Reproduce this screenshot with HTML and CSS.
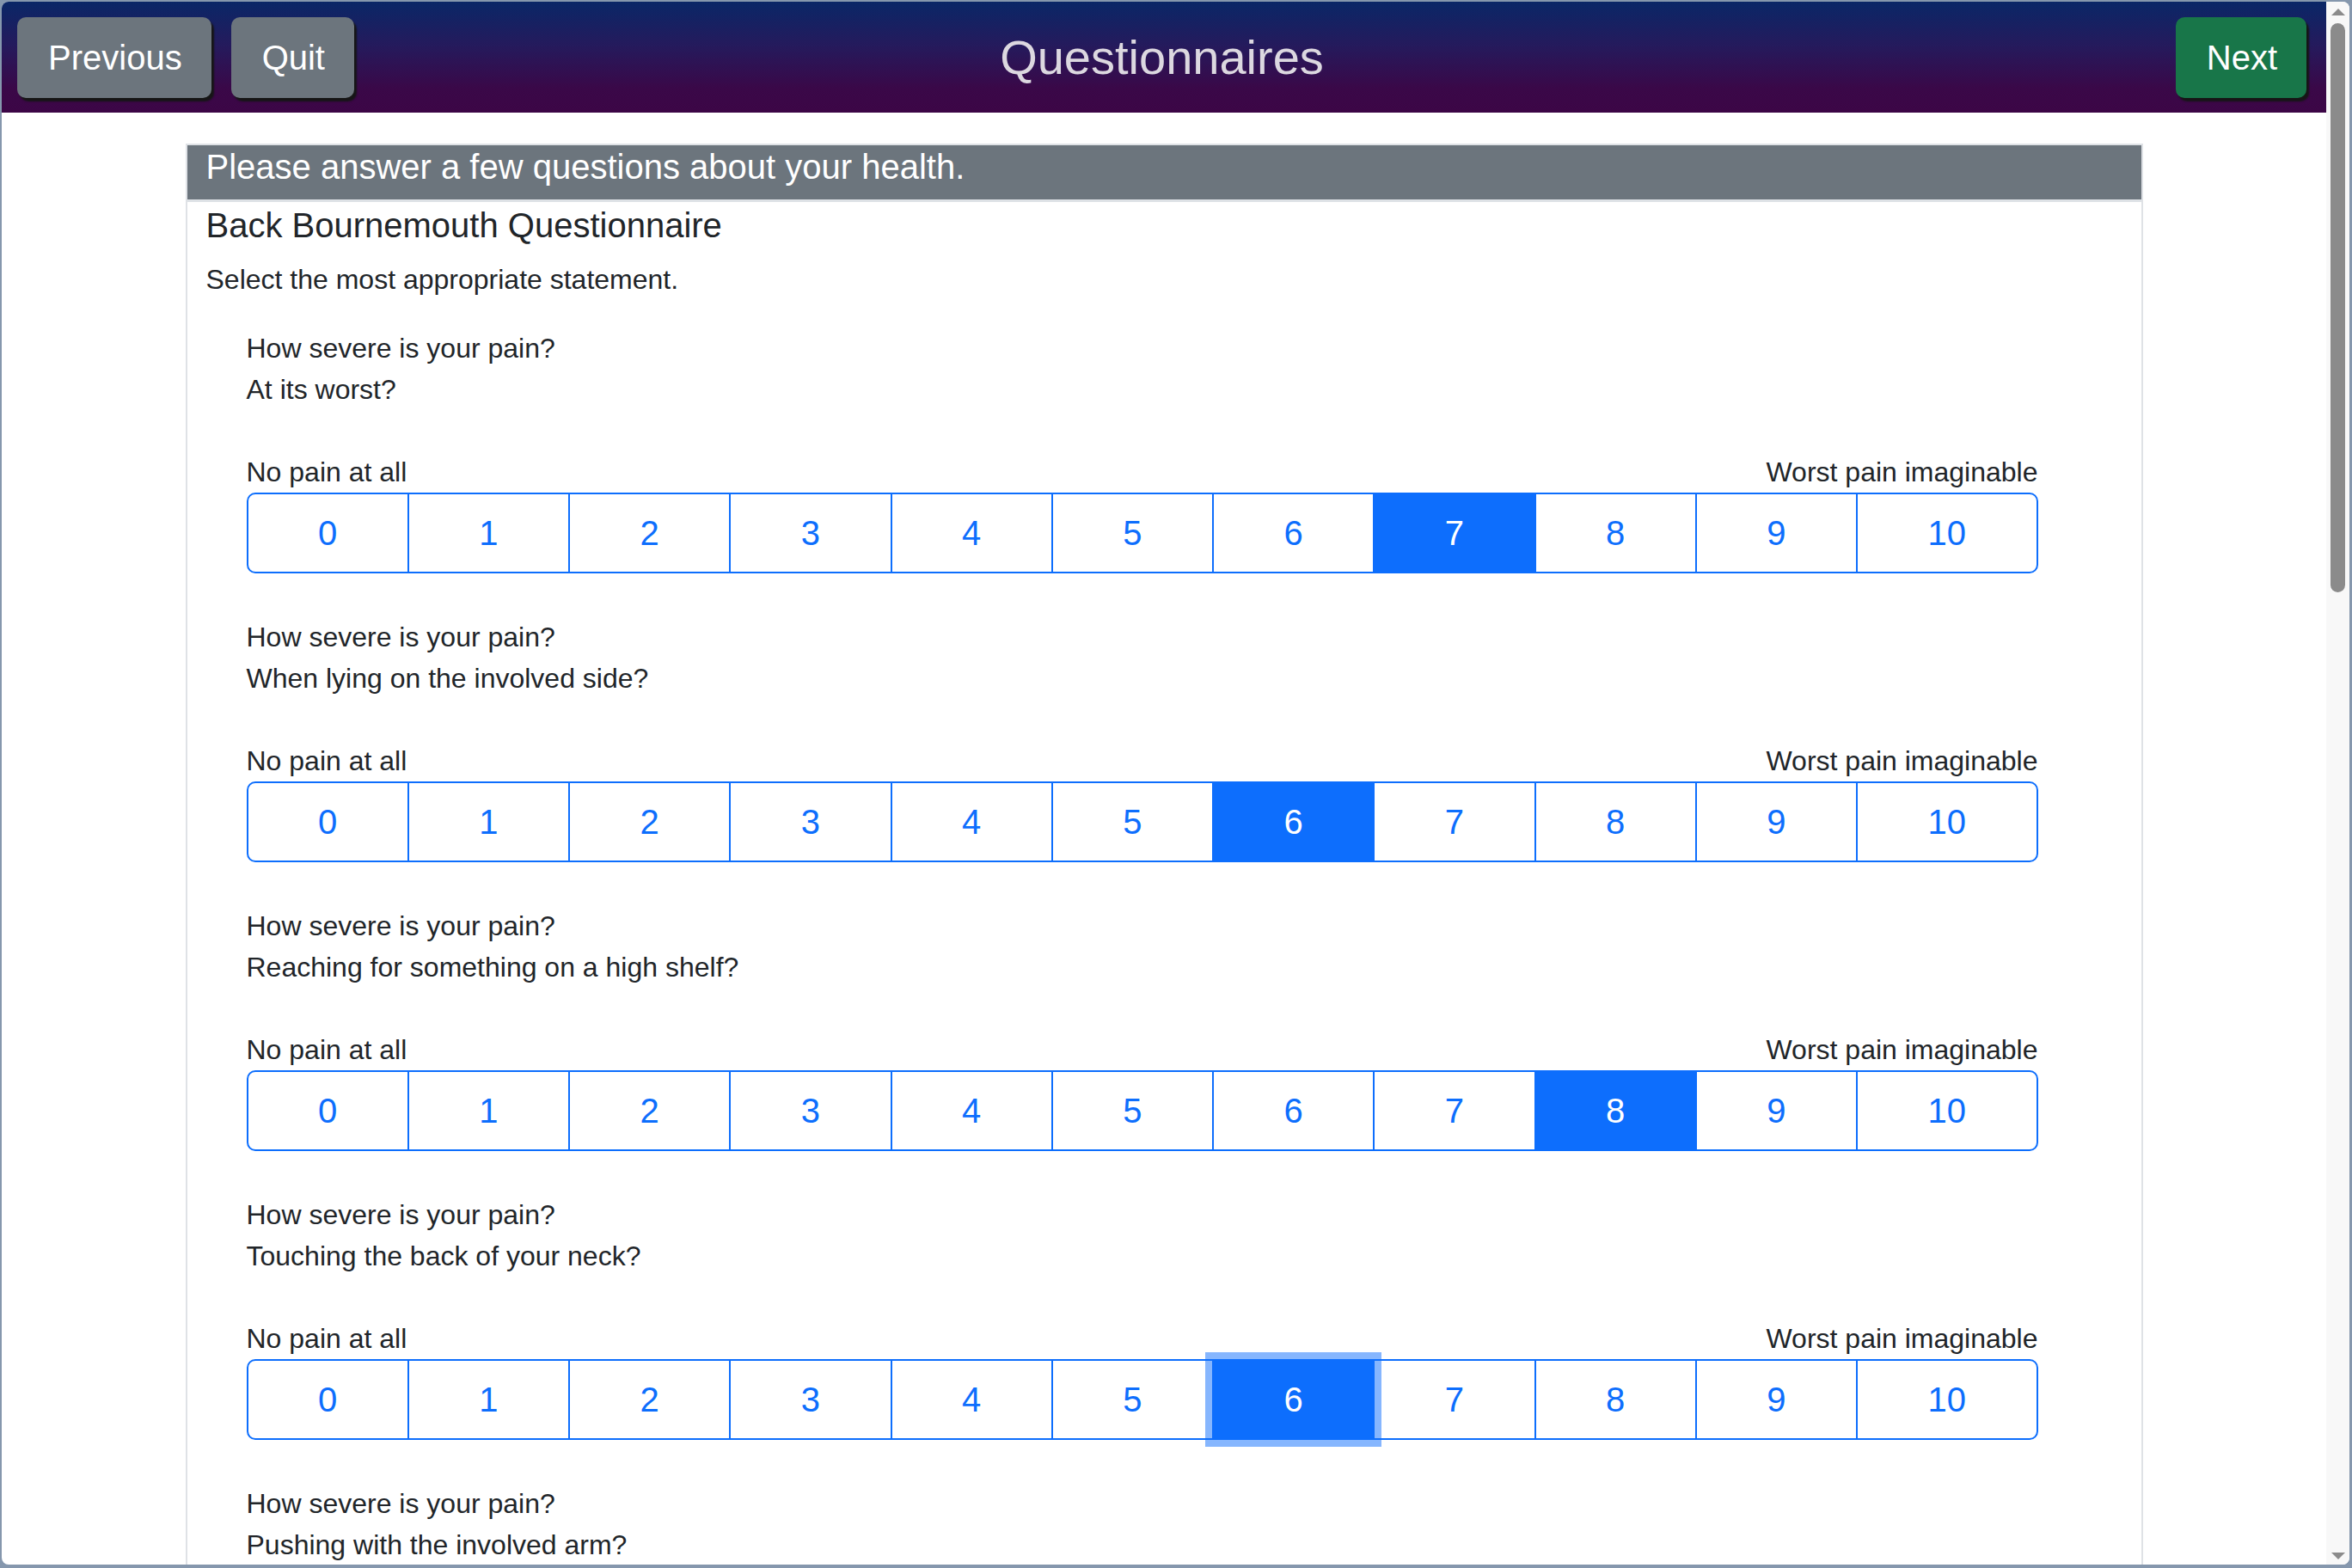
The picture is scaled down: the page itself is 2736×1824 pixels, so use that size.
FILE: index.html
```html
<!DOCTYPE html>
<html lang="en">
<head>
<meta charset="utf-8">
<title>Questionnaires</title>
<link rel="stylesheet" href="styles.css">
</head>
<body>
<div class="window">
  <div class="main">
    <header class="topbar">
      <div class="left">
        <button class="btn-nav gray">Previous</button>
        <button class="btn-nav gray">Quit</button>
      </div>
      <h1 class="title">Questionnaires</h1>
      <div class="right">
        <button class="btn-nav green">Next</button>
      </div>
    </header>
    <div class="card">
      <div class="card-header">Please answer a few questions about your health.</div>
      <div class="card-body">
        <h2 class="qname">Back Bournemouth Questionnaire</h2>
        <p class="instr">Select the most appropriate statement.</p>

        <div class="q">
          <div class="text"><p>How severe is your pain?</p><p>At its worst?</p></div>
          <div class="labels"><span>No pain at all</span><span>Worst pain imaginable</span></div>
          <div class="scale">
            <button>0</button><button>1</button><button>2</button><button>3</button><button>4</button><button>5</button><button>6</button><button class="sel">7</button><button>8</button><button>9</button><button>10</button>
          </div>
        </div>

        <div class="q">
          <div class="text"><p>How severe is your pain?</p><p>When lying on the involved side?</p></div>
          <div class="labels"><span>No pain at all</span><span>Worst pain imaginable</span></div>
          <div class="scale">
            <button>0</button><button>1</button><button>2</button><button>3</button><button>4</button><button>5</button><button class="sel">6</button><button>7</button><button>8</button><button>9</button><button>10</button>
          </div>
        </div>

        <div class="q">
          <div class="text"><p>How severe is your pain?</p><p>Reaching for something on a high shelf?</p></div>
          <div class="labels"><span>No pain at all</span><span>Worst pain imaginable</span></div>
          <div class="scale">
            <button>0</button><button>1</button><button>2</button><button>3</button><button>4</button><button>5</button><button>6</button><button>7</button><button class="sel">8</button><button>9</button><button>10</button>
          </div>
        </div>

        <div class="q">
          <div class="text"><p>How severe is your pain?</p><p>Touching the back of your neck?</p></div>
          <div class="labels"><span>No pain at all</span><span>Worst pain imaginable</span></div>
          <div class="scale">
            <button>0</button><button>1</button><button>2</button><button>3</button><button>4</button><button>5</button><button class="sel focus">6</button><button>7</button><button>8</button><button>9</button><button>10</button>
          </div>
        </div>

        <div class="q">
          <div class="text"><p>How severe is your pain?</p><p>Pushing with the involved arm?</p></div>
          <div class="labels"><span>No pain at all</span><span>Worst pain imaginable</span></div>
          <div class="scale">
            <button>0</button><button>1</button><button>2</button><button>3</button><button>4</button><button>5</button><button>6</button><button>7</button><button>8</button><button>9</button><button>10</button>
          </div>
        </div>
      </div>
    </div>
  </div>
  <div class="scrollbar">
    <span class="arrow up"></span>
    <span class="thumb"></span>
    <span class="spacer"></span>
    <span class="arrow down"></span>
  </div>
</div>
</body>
</html>
```
FILE: styles.css
```css
html, body {
  margin: 0;
  height: 100%;
}
body {
  background: #8597ad;
  font-family: "Liberation Sans", Arial, sans-serif;
  color: #212529;
  overflow: hidden;
}
.window {
  margin: 2px 3px 0 2px;
  height: 1818px;
  background: #fff;
  border-radius: 8px;
  overflow: hidden;
  display: flex;
}
.main {
  flex: 1;
  min-width: 0;
  overflow: hidden;
}
.topbar {
  height: 129px;
  box-sizing: border-box;
  display: grid;
  grid-template-columns: 1fr auto 1fr;
  align-items: center;
  padding: 0 23px 0 18px;
  background: linear-gradient(180deg, #0a2767 0%, #251a5c 40%, #3a0848 78%, #3c0646 100%);
}
.left {
  display: flex;
  gap: 23px;
}
.right {
  display: flex;
  justify-content: flex-end;
}
.btn-nav {
  font-family: "Liberation Sans", Arial, sans-serif;
  font-size: 40px;
  line-height: 60px;
  color: #fff;
  padding: 17px 34px 17px 36px;
  border: 0;
  border-radius: 10px;
  box-shadow: 3px 4px 2px #161616;
}
.gray { background: #6c757d; }
.green { background: #187649; }
.title {
  margin: 0;
  font-size: 56px;
  font-weight: 400;
  color: #dcd8e0;
}
.card {
  width: 2277px;
  box-sizing: border-box;
  margin: 36px auto 0;
  border: 2px solid #dfe2e6;
  border-bottom: 0;
}
.card-header {
  background: #6c757d;
  color: #fff;
  font-size: 40px;
  line-height: 48px;
  padding: 1px 22px 14px;
  border-bottom: 3px solid #dee2e6;
}
.card-body {
  padding: 3px 22px 0;
}
.qname {
  margin: 0 0 15px;
  font-size: 40px;
  line-height: 48px;
  font-weight: 400;
}
.instr {
  margin: 0 0 32px;
  font-size: 32px;
  line-height: 48px;
}
.q {
  margin: 0 98px 0 47px;
  font-size: 32px;
  line-height: 48px;
}
.q p { margin: 0; }
.text { margin-bottom: 48px; }
.labels {
  display: flex;
  justify-content: space-between;
}
.scale {
  display: flex;
  margin: 0 0 50px;
}
.scale button {
  flex: 1 1 auto;
  font-family: "Liberation Sans", Arial, sans-serif;
  font-size: 40px;
  line-height: 60px;
  padding: 15px 32px;
  border: 2px solid #0d6efd;
  margin-left: -2px;
  background: #fff;
  color: #0d6efd;
  border-radius: 0;
}
.scale button:first-child {
  margin-left: 0;
  border-radius: 10px 0 0 10px;
}
.scale button:last-child {
  border-radius: 0 10px 10px 0;
}
.scale button.sel {
  background: #0d6efd;
  color: #fff;
}
.scale button.focus {
  position: relative;
  z-index: 1;
  box-shadow: 0 0 0 8px rgba(13, 110, 253, 0.5);
}
.scrollbar {
  width: 27px;
  background: #f8f8f8;
  display: flex;
  flex-direction: column;
  align-items: center;
  padding: 8px 0 6px;
  box-sizing: border-box;
}
.arrow {
  width: 0;
  height: 0;
  border-left: 8px solid transparent;
  border-right: 8px solid transparent;
}
.arrow.up {
  border-bottom: 8px solid #8b8b8b;
}
.arrow.down {
  border-top: 8px solid #8b8b8b;
}
.thumb {
  width: 17px;
  height: 662px;
  margin-top: 9px;
  border-radius: 9px;
  background: #8b8b8b;
}
.spacer { flex: 1; }
```
